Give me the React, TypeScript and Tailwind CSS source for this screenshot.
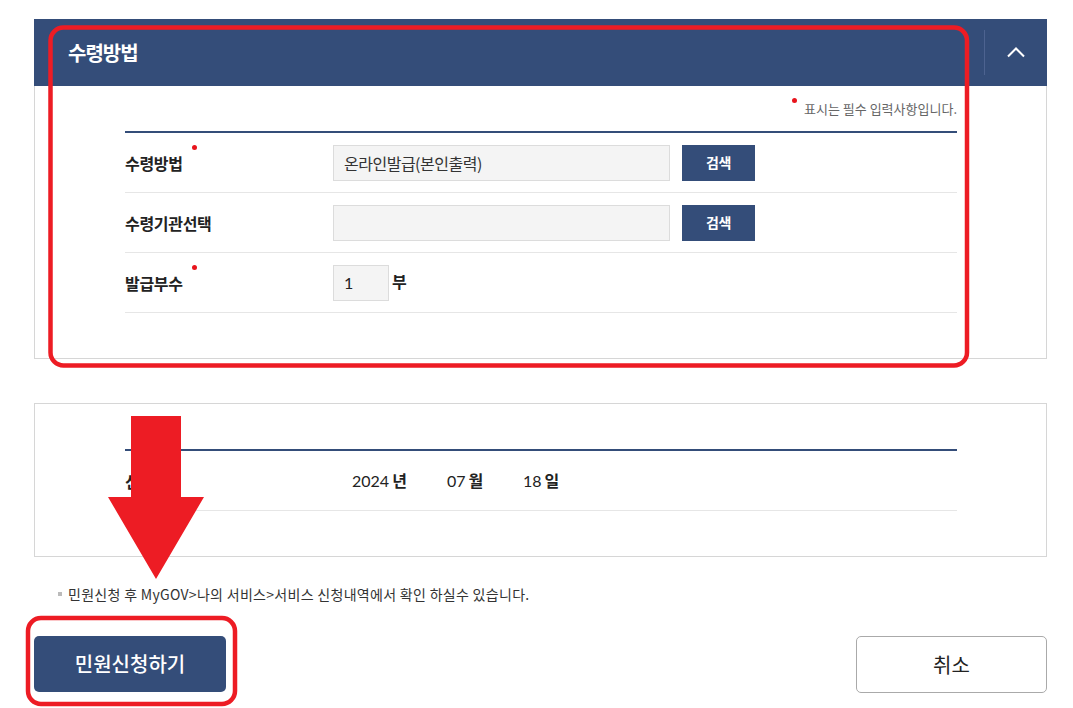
import React from "react";

const rows = [
  { label: "수령방법", required: true, kind: "search", value: "온라인발급(본인출력)" },
  { label: "수령기관선택", required: false, kind: "search", value: "" },
  { label: "발급부수", required: true, kind: "count", value: "1" },
];

function RequiredDot({ className = "" }: { className?: string }) {
  return <span className={`inline-block h-[5px] w-[5px] shrink-0 rounded-full bg-[#e8141c] ${className}`} />;
}

export default function App() {
  return (
    <div className="relative h-[708px] w-[1073px] overflow-hidden bg-white font-['Noto_Sans_CJK_KR',sans-serif] text-[#222]">
      <div className="w-[1047px] pl-[34px] pt-[19px]">
        {/* 수령방법 panel */}
        <section>
          <div className="flex h-[67px] items-center justify-between bg-[#344d79]">
            <h2 className="pl-[34px] text-[20px] font-bold tracking-[-1px] text-white">수령방법</h2>
            <div className="flex h-full items-center">
              <span className="h-[45px] w-px bg-[#4d6390]" />
              <button className="flex w-[62px] items-center justify-center">
                <svg width="18" height="11" viewBox="0 0 18 11" fill="none">
                  <polyline points="1,9.5 9,1.5 17,9.5" stroke="white" strokeWidth="2" />
                </svg>
              </button>
            </div>
          </div>
          <div className="h-[273px] border-x border-b border-[#d6d6d6] pl-[90px] pr-[89px] pt-[13px]">
            <p className="flex h-[20px] items-center justify-end text-[13px] text-[#666]">
              <RequiredDot className="mb-[18px] mr-[7px]" />
              표시는 필수 입력사항입니다.
            </p>
            <div className="mt-[12px] border-t-2 border-[#344d79]">
              {rows.map((row) => (
                <div key={row.label} className="flex h-[60px] items-center border-b border-[#e6e6e6]">
                  <div className="flex w-[208px] items-center text-[16px] font-bold tracking-[-0.3px] text-[#222]">
                    {row.label}
                    {row.required && <RequiredDot className="mb-[31px] ml-[9px]" />}
                  </div>
                  {row.kind === "search" ? (
                    <div className="flex items-center gap-[12px]">
                      <div className="flex h-[36px] w-[337px] items-center border border-[#dcdcdc] bg-[#f4f4f4] px-[10px] text-[16px] tracking-[-0.5px] text-[#333]">
                        {row.value}
                      </div>
                      <button className="h-[36px] w-[73px] bg-[#344d79] text-[14px] font-bold tracking-[-0.5px] text-white">
                        검색
                      </button>
                    </div>
                  ) : (
                    <div className="flex items-center gap-[3px]">
                      <div className="flex h-[36px] w-[56px] items-center border border-[#dcdcdc] bg-[#f4f4f4] px-[10px] font-['Lato',sans-serif] text-[16px] text-[#222]">
                        {row.value}
                      </div>
                      <span className="mb-[4px] text-[16px] font-bold text-[#222]">부</span>
                    </div>
                  )}
                </div>
              ))}
            </div>
          </div>
        </section>

        {/* 신청일 panel */}
        <section className="mt-[44px] h-[154px] border border-[#d6d6d6] pl-[90px] pr-[89px] pt-[45px]">
          <div className="border-t-2 border-[#344d79]">
            <div className="flex h-[60px] items-center border-b border-[#e6e6e6]">
              <div className="w-[208px] text-[16px] font-bold tracking-[-0.3px]">신청일</div>
              <div className="flex items-center pl-[19px] text-[16px] text-[#222]">
                <span className="w-[95px]">
                  <span className="font-['Lato',sans-serif]">2024</span>
                  <span className="ml-[3px] font-bold">년</span>
                </span>
                <span className="w-[76px]">
                  <span className="font-['Lato',sans-serif]">07</span>
                  <span className="ml-[3px] font-bold">월</span>
                </span>
                <span>
                  <span className="font-['Lato',sans-serif]">18</span>
                  <span className="ml-[3px] font-bold">일</span>
                </span>
              </div>
            </div>
          </div>
        </section>

        <p className="mt-[27px] flex h-[20px] items-center pl-[24px] text-[14px] tracking-[0.3px] text-[#333]">
          <span className="mr-[6px] inline-block h-[4px] w-[4px] bg-[#bbb]" />
          민원신청 후 MyGOV&gt;나의 서비스&gt;서비스 신청내역에서 확인 하실수 있습니다.
        </p>

        <div className="mt-[32px] flex justify-between">
          <button className="h-[56px] w-[192px] rounded-[5px] bg-[#344d79] text-[20px] font-medium text-white">
            민원신청하기
          </button>
          <button className="h-[57px] w-[191px] rounded-[5px] border border-[#aaa] bg-white text-[20px] text-[#222]">
            취소
          </button>
        </div>
      </div>

      {/* red annotation marks */}
      <svg className="pointer-events-none absolute left-0 top-0" width="1073" height="708" viewBox="0 0 1073 708" fill="none">
        <rect x="50.5" y="27.5" width="916.5" height="338" rx="13" stroke="#ed1c24" strokeWidth="4.5" />
        <rect x="28" y="618" width="207" height="86" rx="13" stroke="#ed1c24" strokeWidth="4.5" />
        <path d="M131 416 H181 V497 H204 L156 579 L108 497 H131 Z" fill="#ed1c24" />
      </svg>
    </div>
  );
}
